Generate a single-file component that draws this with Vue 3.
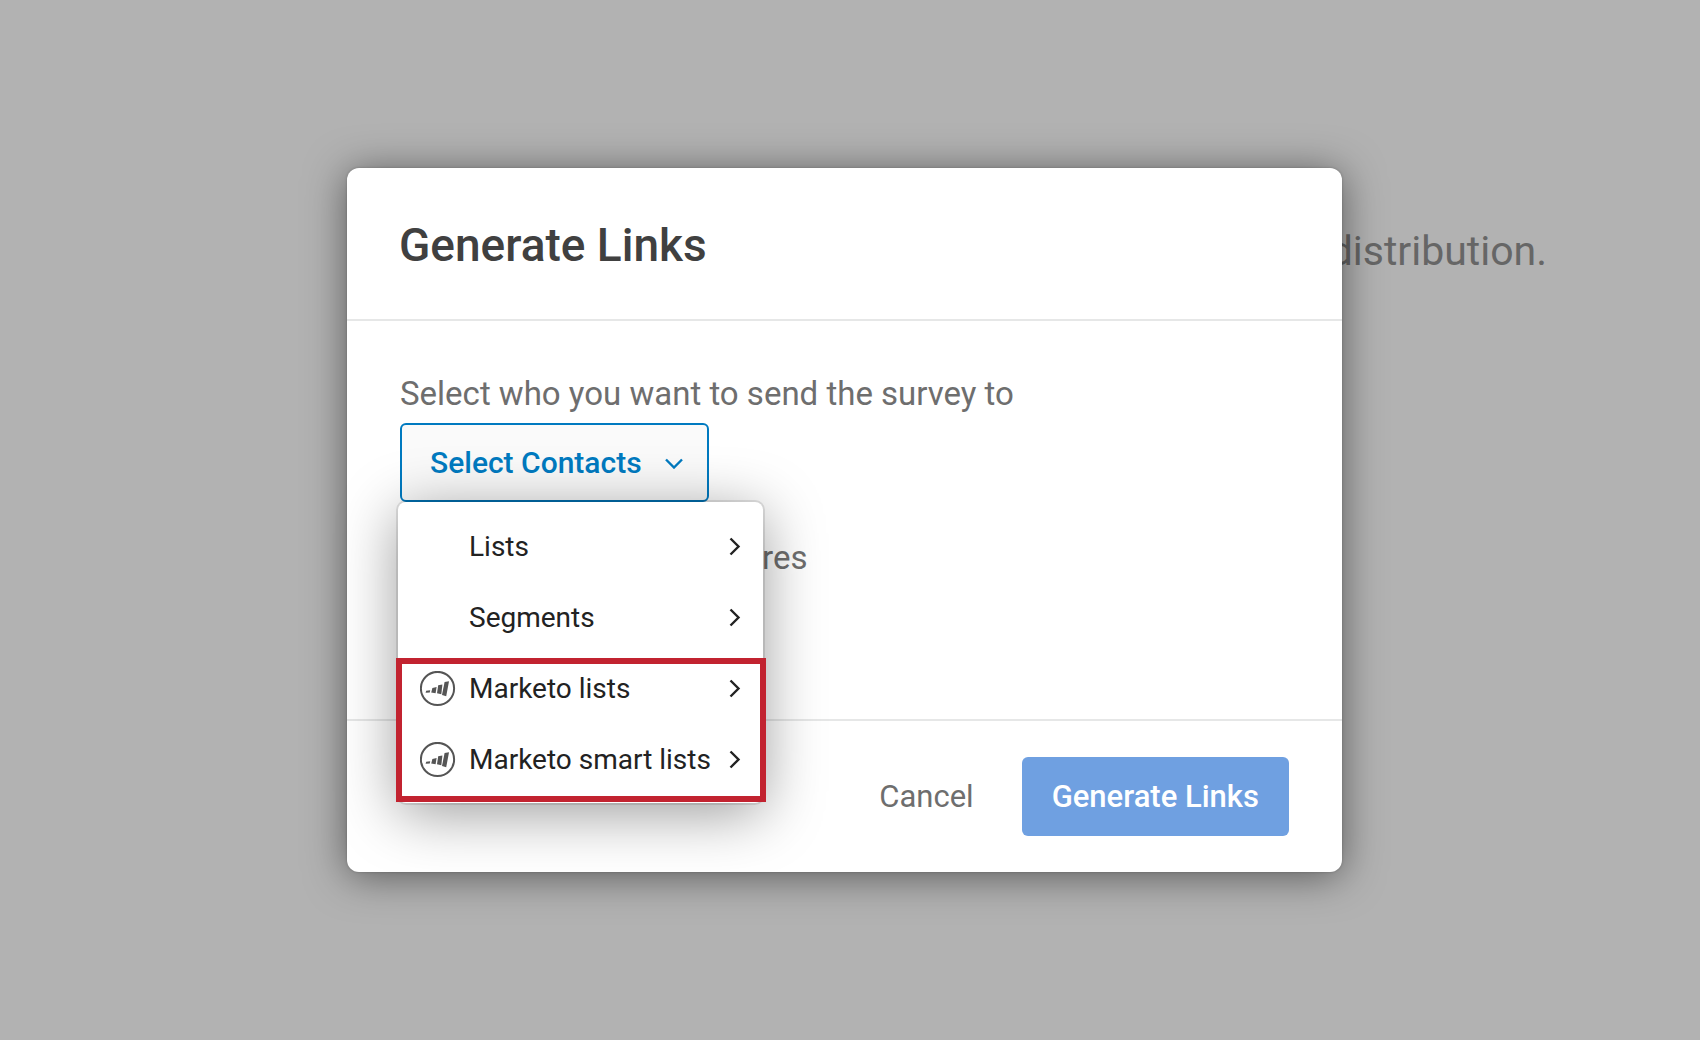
<script setup>
const items = [
  { label: 'Lists', marketo: false },
  { label: 'Segments', marketo: false },
  { label: 'Marketo lists', marketo: true },
  { label: 'Marketo smart lists', marketo: true },
]
</script>

<template>
  <div class="page">
    <p class="backdrop-text">distribution.</p>
    <div class="overlay">
      <section class="dialog" role="dialog" aria-modal="true" aria-labelledby="dialog-title">
        <header class="dialog-header">
          <h1 id="dialog-title">Generate Links</h1>
        </header>
        <div class="dialog-body">
          <p id="contacts-label" class="field-label">Select who you want to send the survey to</p>
          <div class="picker">
            <button id="contacts" type="button" class="select-button" aria-haspopup="menu" aria-expanded="true" aria-describedby="contacts-label">
              Select Contacts
              <svg class="caret" width="18" height="12" viewBox="0 0 18 12" aria-hidden="true">
                <path d="M1 2.5 L9 10.5 L17 2.5" />
              </svg>
            </button>
            <div class="menu" role="menu" aria-labelledby="contacts">
              <button v-for="item in items" :key="item.label" type="button" class="menu-item" role="menuitem">
                <span class="menu-icon">
                  <svg v-if="item.marketo" width="36" height="36" viewBox="0 0 36 36" aria-hidden="true">
                    <circle cx="17.5" cy="17.5" r="16.6" />
                    <path d="M6.2 19.7 L10.2 19.2 L9.8 21.6 L5.6 21.8 Z" />
                    <path d="M12.4 16.9 L16.6 16.1 L15.6 22.3 L11.2 21.6 Z" />
                    <path d="M18.2 14.3 L22.4 13.5 L21.3 23.2 L17 22.2 Z" />
                    <path d="M24.6 11 L29 10.2 L26.2 25.2 L22 24 Z" />
                  </svg>
                </span>
                <span class="menu-label">{{ item.label }}</span>
                <svg class="chevron" width="12" height="20" viewBox="0 0 12 20" aria-hidden="true">
                  <path d="M1.5 1.5 L9.5 9.5 L1.5 17.5" />
                </svg>
              </button>
              <div class="highlight"></div>
            </div>
          </div>
          <p class="expiry">res</p>
        </div>
        <footer class="dialog-footer">
          <button type="button" class="cancel">Cancel</button>
          <button type="button" class="primary">Generate Links</button>
        </footer>
      </section>
    </div>
  </div>
</template>

<style>
body {
  margin: 0;
  background: #b2b2b2;
}
</style>

<style scoped>
.page {
  position: relative;
  min-height: 100vh;
  box-sizing: border-box;
  padding: 227px 153px 0 0;
  background: #b2b2b2;
  font-family: Roboto, "Noto Sans", sans-serif;
}
h1, p {
  margin: 0;
}
button {
  font-family: inherit;
  cursor: pointer;
}
.backdrop-text {
  text-align: right;
  font-size: 41px;
  line-height: 48px;
  color: #666;
}
.overlay {
  position: absolute;
  inset: 0;
  display: flex;
  align-items: center;
  justify-content: center;
  padding-right: 11px;
}
.dialog {
  width: 90%;
  max-width: 995px;
  border-radius: 12px;
  background: #fff;
  box-shadow: 0 0 2px 1px rgba(0, 0, 0, 0.1), 0 4px 40px rgba(0, 0, 0, 0.5);
}
.dialog-header {
  padding: 49px 52px 46px;
  border-bottom: 2px solid #e6e7e7;
}
h1 {
  font-size: 46px;
  line-height: 56px;
  font-weight: 500;
  color: #404040;
}
.dialog-body {
  box-sizing: border-box;
  min-height: 398px;
  padding: 53px 53px 0;
}
.field-label,
.expiry {
  font-size: 33px;
  line-height: 40px;
  color: #6e6e6e;
}
.picker {
  position: relative;
  width: fit-content;
  margin-top: 9px;
}
.select-button {
  display: flex;
  align-items: center;
  gap: 23px;
  height: 79px;
  padding: 0 24px 0 28px;
  border: 2px solid #007ac0;
  border-radius: 6px;
  background: #fafafa;
  font-size: 30px;
  font-weight: 500;
  color: #007ac0;
}
.caret,
.chevron {
  flex: none;
  fill: none;
  stroke: currentColor;
  stroke-width: 2.4;
}
.menu {
  position: absolute;
  z-index: 2;
  top: 79px;
  left: -2px;
  width: 365px;
  padding: 9px 0 8px;
  border-radius: 8px;
  background: #fff;
  box-shadow: 0 0 0 2px rgba(0, 0, 0, 0.1), 0 10px 60px rgba(0, 0, 0, 0.4);
}
.menu-item {
  display: flex;
  align-items: center;
  width: 100%;
  height: 71px;
  padding: 0 22px;
  border: 0;
  background: none;
  font-size: 28px;
  color: #222;
  text-align: left;
}
.menu-icon {
  flex: none;
  display: flex;
  width: 49px;
}
.menu-icon circle {
  fill: none;
  stroke: #555;
  stroke-width: 2;
}
.menu-icon path {
  fill: #555;
}
.menu-label {
  flex: 1;
  white-space: nowrap;
}
.highlight {
  position: absolute;
  top: 156px;
  right: -3px;
  bottom: 1px;
  left: -2px;
  border: 6px solid #c22330;
  pointer-events: none;
}
.expiry {
  margin: 36px 0 0 362px;
}
.dialog-footer {
  display: flex;
  align-items: center;
  justify-content: flex-end;
  gap: 48px;
  padding: 36px 53px;
  border-top: 2px solid #e6e7e7;
}
.cancel,
.primary {
  height: 79px;
  padding: 0;
  border: 0;
  font-size: 31px;
}
.cancel {
  background: none;
  color: #6e6e6e;
}
.primary {
  padding: 0 30px;
  border-radius: 6px;
  background: #6fa0e1;
  font-weight: 500;
  color: #fff;
}
</style>
